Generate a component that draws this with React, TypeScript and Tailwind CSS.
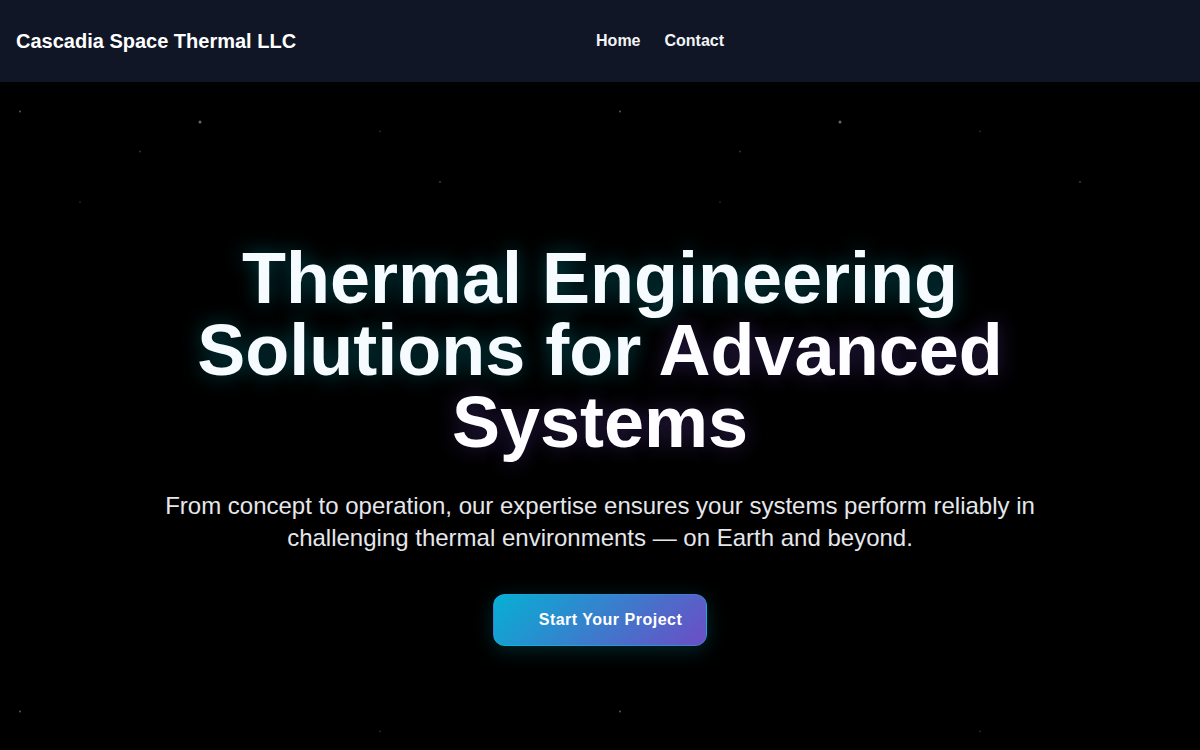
import React from 'react';

interface NavItem {
    label : string;
    href : string;
}

const navItems : NavItem[] = [
    { label: 'Home', href: '#home' },
    { label: 'Contact', href: '#contact' },
];

const Header : React.FC = () => {
    return (
        <header className="flex items-center justify-between px-4 py-6 h-[82px] bg-[#101626]">
            <a href="#home" className="text-xl font-bold text-white">Cascadia Space Thermal LLC</a>
            <nav className="flex items-center gap-6">
                {navItems.map((item) => (
                    <a key={item.label} href={item.href} className="font-bold text-gray-100 hover:text-cyan-300">{item.label}</a>
                ))}
            </nav>
            <div className="w-40" />
        </header>
    );
}

// Two tiles with different periods, so the stars do not line up
const StarField : React.FC = () => {
    return (
        <svg className="absolute inset-0 w-full h-full" aria-hidden="true">
            <defs>
                <pattern id="stars-a" width="600" height="600" patternUnits="userSpaceOnUse">
                    <circle cx="20" cy="29.5" r="1" fill="#fff" opacity="0.35" />
                    <circle cx="380" cy="49.5" r="1" fill="#fff" opacity="0.15" />
                    <circle cx="140" cy="69.5" r="1" fill="#fff" opacity="0.2" />
                </pattern>
                <pattern id="stars-b" width="640" height="680" patternUnits="userSpaceOnUse">
                    <circle cx="200" cy="40" r="1.5" fill="#fff" opacity="0.4" />
                    <circle cx="80" cy="120" r="1" fill="#fff" opacity="0.13" />
                    <circle cx="440" cy="100" r="1" fill="#fff" opacity="0.22" />
                </pattern>
            </defs>
            <rect width="100%" height="100%" fill="url(#stars-a)" />
            <rect width="100%" height="100%" fill="url(#stars-b)" />
        </svg>
    );
}

const Hero : React.FC = () => {
    return (
        <main className="relative flex-1 px-4 pt-40 pb-24 bg-black">
            <StarField />
            <div className="relative max-w-4xl mx-auto text-center">
                <h1 className="mb-8 text-7xl leading-none font-bold text-[#f6fbff] [text-shadow:0_0_20px_rgba(0,200,220,0.35)]">
                    Thermal Engineering Solutions for{' '}
                    <span className="text-[#fefdff] [text-shadow:0_0_20px_rgba(139,92,246,0.3)]">Advanced Systems</span>
                </h1>
                <p className="mb-10 text-2xl text-gray-200">
                    From concept to operation, our expertise ensures your systems perform reliably in challenging thermal environments — on Earth and beyond.
                </p>
                <button
                    type="button"
                    className="h-[52px] pl-[45px] pr-6 rounded-xl border border-cyan-400/30 bg-[linear-gradient(135deg,#06b0d4,#6d4cc5)] font-bold tracking-[0.5px] text-white shadow-[0_4px_20px_rgba(0,200,220,0.2)] cursor-pointer"
                >
                    Start Your Project
                </button>
            </div>
        </main>
    );
}

const App : React.FC = () => {
    return (
        <div className="flex flex-col min-h-screen bg-black font-['Liberation_Sans',Arial,sans-serif]">
            <Header />
            <Hero />
        </div>
    );
}

export default App;
